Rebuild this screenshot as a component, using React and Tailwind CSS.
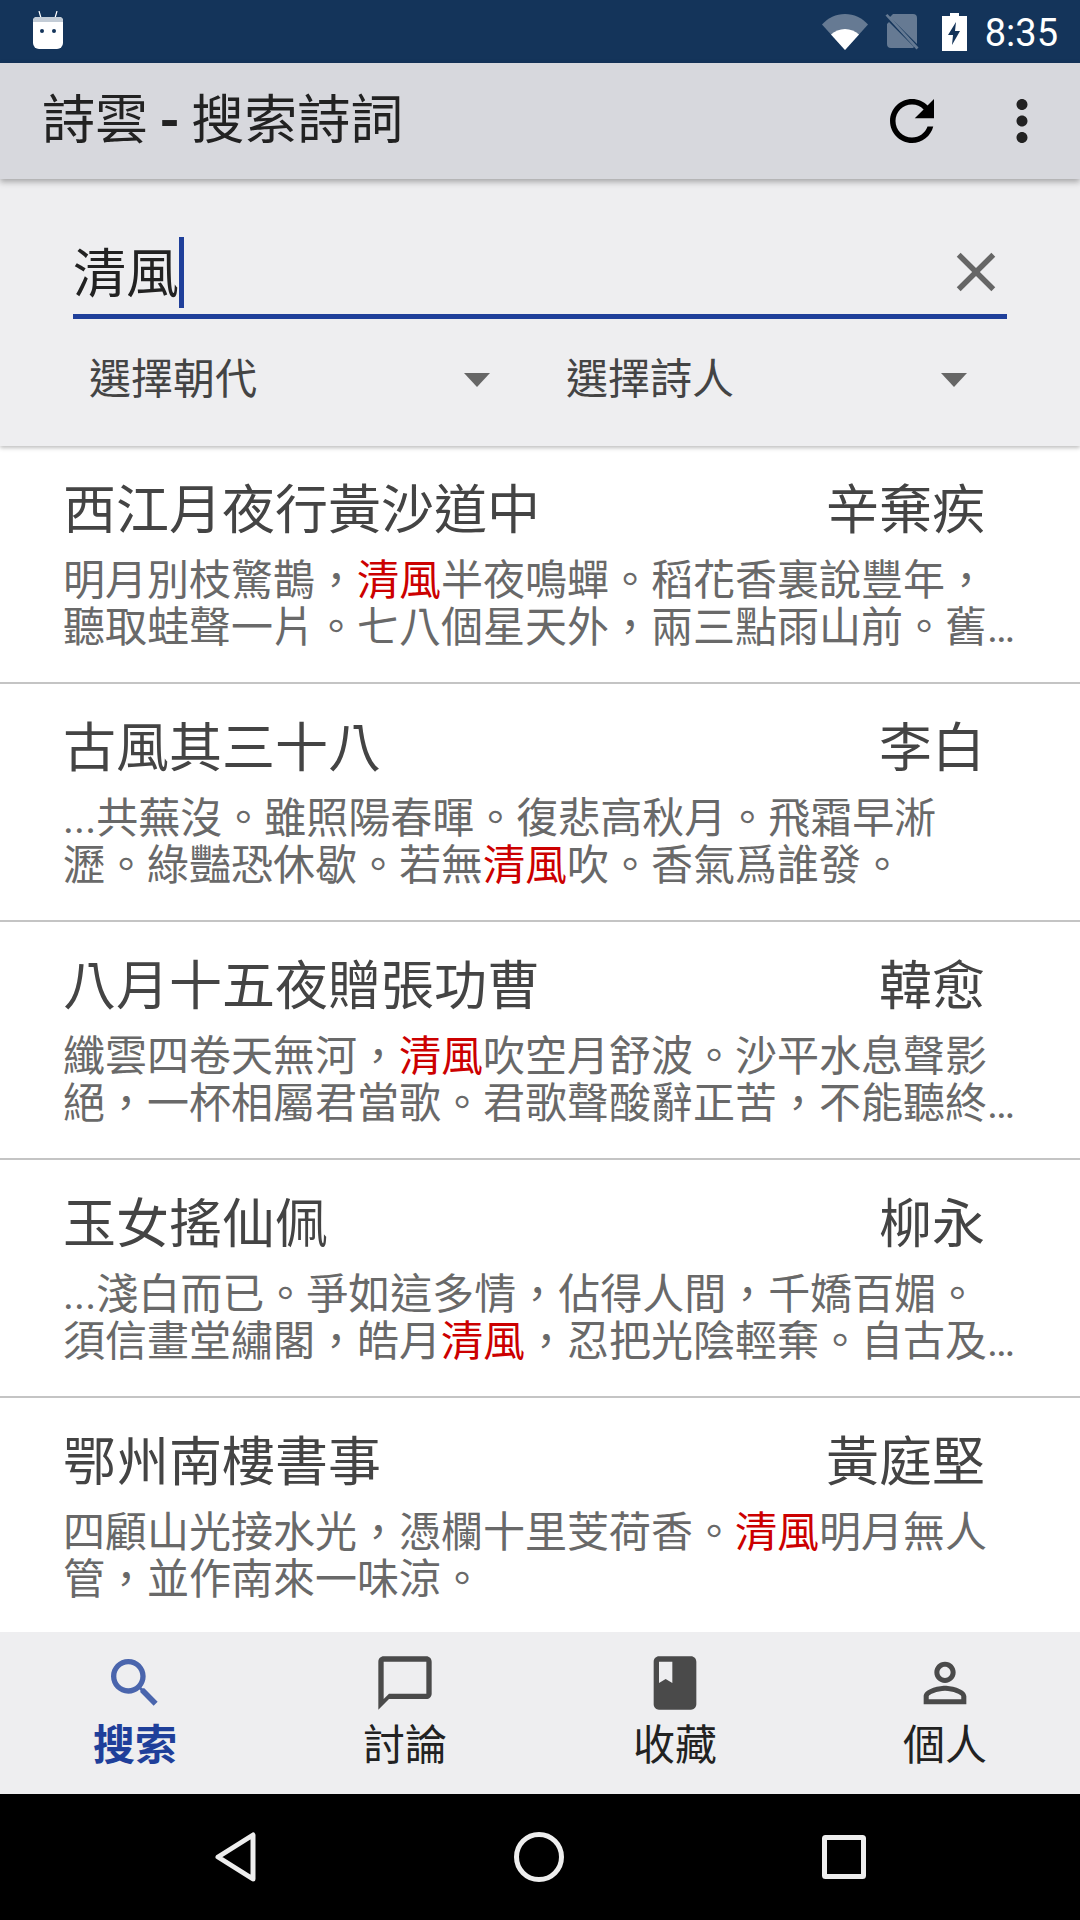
import React from 'react';

// lines are written out because the app cuts them at its own width
const POEMS = [
  {
    title: '西江月夜行黃沙道中',
    author: '辛棄疾',
    lines: ['明月別枝驚鵲，清風半夜鳴蟬。稻花香裏說豐年，', '聽取蛙聲一片。七八個星天外，兩三點雨山前。舊…'],
  },
  {
    title: '古風其三十八',
    author: '李白',
    lines: ['...共蕪沒。雖照陽春暉。復悲高秋月。飛霜早淅', '瀝。綠豔恐休歇。若無清風吹。香氣爲誰發。'],
  },
  {
    title: '八月十五夜贈張功曹',
    author: '韓愈',
    lines: ['纖雲四卷天無河，清風吹空月舒波。沙平水息聲影', '絕，一杯相屬君當歌。君歌聲酸辭正苦，不能聽終…'],
  },
  {
    title: '玉女搖仙佩',
    author: '柳永',
    lines: ['...淺白而已。爭如這多情，佔得人間，千嬌百媚。', '須信畫堂繡閣，皓月清風，忍把光陰輕棄。自古及…'],
  },
  {
    title: '鄂州南樓書事',
    author: '黃庭堅',
    lines: ['四顧山光接水光，憑欄十里芰荷香。清風明月無人', '管，並作南來一味涼。'],
  },
];

const Icon = ({ d, className }) => (
  <svg viewBox="0 0 24 24" fill="currentColor" className={className}>
    <path d={d} />
  </svg>
);

const TABS = [
  {
    label: '搜索',
    active: true,
    d: 'M15.5 14h-.79l-.28-.27C15.41 12.59 16 11.11 16 9.5 16 5.91 13.09 3 9.5 3S3 5.91 3 9.5 5.91 16 9.5 16c1.61 0 3.09-.59 4.23-1.57l.27.28v.79l5 4.99L20.49 19l-4.99-5zm-6 0C7.01 14 5 11.99 5 9.5S7.01 5 9.5 5 14 7.01 14 9.5 11.99 14 9.5 14z',
  },
  {
    label: '討論',
    d: 'M20 2H4c-1.1 0-2 .9-2 2v18l4-4h14c1.1 0 2-.9 2-2V4c0-1.1-.9-2-2-2zm0 14H6l-2 2V4h16v12z',
  },
  {
    label: '收藏',
    d: 'M18 2H6c-1.1 0-2 .9-2 2v16c0 1.1.9 2 2 2h12c1.1 0 2-.9 2-2V4c0-1.1-.9-2-2-2zM6 4h5v8l-2.5-1.5L6 12V4z',
  },
  {
    label: '個人',
    d: 'M12 5.9c1.16 0 2.1.94 2.1 2.1s-.94 2.1-2.1 2.1S9.9 9.16 9.9 8s.94-2.1 2.1-2.1m0 9c2.97 0 6.1 1.46 6.1 2.1v1.1H5.9V17c0-.64 3.13-2.1 6.1-2.1M12 4C9.79 4 8 5.79 8 8s1.79 4 4 4 4-1.79 4-4-1.79-4-4-4zm0 9c-2.67 0-8 1.34-8 4v3h16v-3c0-2.66-5.33-4-8-4z',
  },
];

const StatusBar = () => (
  <div className="h-[63px] shrink-0 bg-[#14345a] flex items-center pl-[32px] pr-[22px] text-white">
    {/* notification robot */}
    <svg viewBox="0 0 32 38" className="w-[32px] h-[38px] mb-[4px]">
      <path d="M7 0l2 7M25 0l-2 7" stroke="#fff" strokeWidth="1.2" fill="none" />
      <path d="M5 6h22a4 4 0 0 1 4 4v22a6 6 0 0 1-6 6H7a6 6 0 0 1-6-6V10a4 4 0 0 1 4-4z" fill="#fff" />
      <path d="M5 6h22a4 4 0 0 1 4 4v1H1v-1a4 4 0 0 1 4-4z" fill="#c3ccd6" />
      <circle cx="10" cy="20" r="2" fill="#14345a" />
      <circle cx="22" cy="20" r="2" fill="#14345a" />
    </svg>
    <div className="ml-auto flex items-center">
      <svg viewBox="0 0 46 36" className="w-[46px] h-[36px]">
        <path d="M0 10.5C6 4 14 0 23 0s17 4 23 10.5L23 36z" fill="#fff" fillOpacity="0.35" />
        <path d="M9 20.5c3.700-3.400 8.700-5.500 14-5.500s10.300 2.100 14 5.500L23 36z" fill="#fff" />
      </svg>
      <svg viewBox="0 0 34 36" className="w-[34px] h-[36px] ml-[17px]">
        <path d="M8 0h20a4 4 0 0 1 4 4v26L5 3zM4 8l25 25a4 4 0 0 1-1 1H6a4 4 0 0 1-4-4V10z" fill="#fff" fillOpacity="0.35" />
        <path d="M0.500 1.500l2-1.500 31 33.500-2 2z" fill="#fff" fillOpacity="0.35" />
      </svg>
      <svg viewBox="0 0 25 38" className="w-[25px] h-[38px] ml-[23px]">
        <path fillRule="evenodd" d="M8 0h9v3h8v35H0V3h8zM14 9L6 22h5l-1 10 8-14h-5z" fill="#fff" />
      </svg>
      <span className="ml-[18px] mt-[3px] text-[38px] leading-none font-[Roboto,sans-serif]">8:35</span>
    </div>
  </div>
);

const AppBar = () => (
  <div className="relative z-10 h-[116px] shrink-0 bg-[#d7d8dd] shadow-[0_3px_6px_rgba(0,0,0,0.3)] flex items-center pl-[42px] text-[#222]">
    <span className="text-[53px] leading-none">
      詩雲 <span className="font-bold -mx-[2px]">-</span> 搜索詩詞
    </span>
    <Icon
      className="w-[66px] h-[66px] ml-auto text-black"
      d="M17.65 6.35C16.2 4.9 14.21 4 12 4c-4.42 0-7.99 3.58-7.99 8s3.57 8 7.99 8c3.730 0 6.840-2.550 7.730-6h-2.080c-.820 2.330-3.040 4-5.650 4-3.310 0-6-2.690-6-6s2.690-6 6-6c1.660 0 3.140.690 4.220 1.780L13 11h7V4l-2.350 2.350z"
    />
    <Icon
      className="w-[66px] h-[66px] ml-[44px] mr-[25px] text-[#222]"
      d="M12 8c1.100 0 2-.9 2-2s-.9-2-2-2-2 .9-2 2 .9 2 2 2zm0 2c-1.100 0-2 .9-2 2s.9 2 2 2 2-.9 2-2-.9-2-2-2zm0 6c-1.100 0-2 .9-2 2s.9 2 2 2 2-.9 2-2-.9-2-2-2z"
    />
  </div>
);

const Dropdown = ({ label }) => (
  <div className="w-[477px] shrink-0 flex items-center pl-[16px]">
    <span className="text-[42px] leading-none text-[#444]">{label}</span>
    <span className="ml-[207px] w-0 h-0 border-x-[13px] border-x-transparent border-t-[14px] border-t-[#666]" />
  </div>
);

const SearchPanel = () => (
  <div className="relative z-[5] h-[267px] shrink-0 bg-[#eeeef0] shadow-[0_2px_4px_rgba(0,0,0,0.25)] px-[73px] pt-[58px]">
    <div className="h-[82px] border-b-[5px] border-[#1f3f9a] flex items-start">
      <span className="text-[53px] leading-[76px] text-[#222]">清風</span>
      <span className="w-[5px] h-[71px] bg-[#1f3f9a]" />
      <Icon
        className="ml-auto mt-[2px] -mr-[2px] w-[66px] h-[66px] text-[#666]"
        d="M19 6.410L17.590 5 12 10.590 6.410 5 5 6.410 10.590 12 5 17.590 6.410 19 12 13.410 17.590 19 19 17.590 13.410 12z"
      />
    </div>
    <div className="flex mt-[40px]">
      <Dropdown label="選擇朝代" />
      <Dropdown label="選擇詩人" />
    </div>
  </div>
);

const PoemLine = ({ text }) => {
  const parts = text.split('清風');
  return (
    <div className="whitespace-nowrap">
      {parts[0]}
      {parts.length > 1 && <span className="text-[#cc0000]">清風</span>}
      {parts[1]}
    </div>
  );
};

const PoemRow = ({ poem, last }) => (
  <div className={`h-[238px] shrink-0 px-[63px] pt-[29px] ${last ? '' : 'border-b-2 border-[#c4c4c4]'}`}>
    <div className="flex justify-between pr-[32px] text-[53px] leading-[72px] text-[#444]">
      <span>{poem.title}</span>
      <span>{poem.author}</span>
    </div>
    <div className="mt-[10px] text-[42px] leading-[47px] text-[#696969]">
      {poem.lines.map((line) => (
        <PoemLine key={line} text={line} />
      ))}
    </div>
  </div>
);

const BottomTabs = () => (
  <div className="h-[162px] shrink-0 bg-[#eeeef0] grid grid-cols-4">
    {TABS.map((tab) => (
      <div key={tab.label} className="flex flex-col items-center pt-[19px]">
        <Icon
          d={tab.d}
          className={`w-[64px] h-[64px] ${tab.active ? 'text-[#4a65ad]' : 'text-[#4a4a4a]'}`}
        />
        <span
          className={`mt-[6px] text-[42px] leading-[50px] ${tab.active ? 'font-bold text-[#1f3f9a]' : 'text-[#222]'}`}
        >
          {tab.label}
        </span>
      </div>
    ))}
  </div>
);

const NavBar = () => (
  <div className="h-[126px] shrink-0 bg-black flex items-center justify-center text-[#eee]">
    <svg viewBox="0 0 42 50" className="w-[42px] h-[50px] mr-[257px]" fill="none" stroke="currentColor" strokeWidth="5" strokeLinejoin="round">
      <path d="M38 3v44L3 25z" />
    </svg>
    <svg viewBox="0 0 50 50" className="w-[50px] h-[50px] mr-[257px]" fill="none" stroke="currentColor" strokeWidth="5">
      <circle cx="25" cy="25" r="22.5" />
    </svg>
    <svg viewBox="0 0 44 44" className="w-[44px] h-[44px] ml-[1px]" fill="none" stroke="currentColor" strokeWidth="5" strokeLinejoin="round">
      <rect x="2.500" y="2.500" width="39" height="39" rx="1" />
    </svg>
  </div>
);

export default function App() {
  return (
    <div className="w-[1080px] h-[1920px] flex flex-col overflow-hidden bg-white font-[Roboto,'Noto_Sans_CJK_TC',sans-serif]">
      <StatusBar />
      <AppBar />
      <SearchPanel />
      <div className="flex-1 min-h-0 overflow-hidden flex flex-col">
        {POEMS.map((poem, i) => (
          <PoemRow key={poem.title} poem={poem} last={i === POEMS.length - 1} />
        ))}
      </div>
      <BottomTabs />
      <NavBar />
    </div>
  );
}
